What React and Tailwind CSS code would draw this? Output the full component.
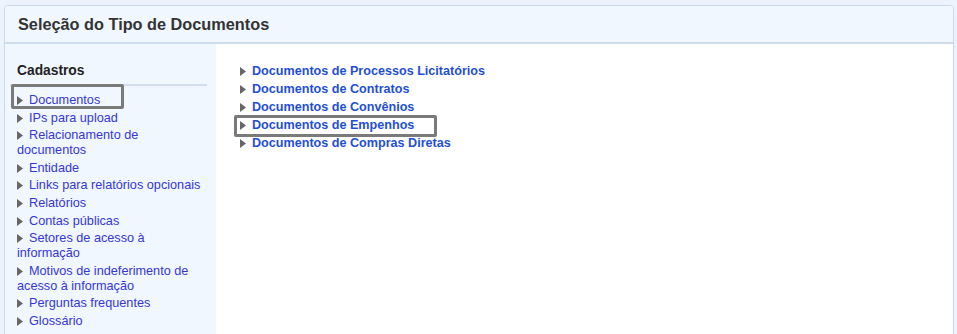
import React from "react";

const Tri = () => (
  <svg width="6" height="9" viewBox="0 0 6 9" className="inline-block mr-[6px] align-[-1px]">
    <polygon points="0,0 6,4.5 0,9" fill="#666666" />
  </svg>
);

const side = [
  "Documentos",
  "IPs para upload",
  "Relacionamento de documentos",
  "Entidade",
  "Links para relatórios opcionais",
  "Relatórios",
  "Contas públicas",
  "Setores de acesso à informação",
  "Motivos de indeferimento de acesso à informação",
  "Perguntas frequentes",
  "Glossário",
];

const docs = [
  "Documentos de Processos Licitatórios",
  "Documentos de Contratos",
  "Documentos de Convênios",
  "Documentos de Empenhos",
  "Documentos de Compras Diretas",
];

export default function App() {
  return (
    <div
      className="min-h-[334px] bg-[#edf3fc] pt-[5px] pl-[4px] pr-[3px] overflow-hidden"
      style={{ fontFamily: '"Liberation Sans", Arial, sans-serif' }}
    >
      <div className="border border-[#c9d9ec] rounded-t-[4px] overflow-hidden">
        <div className="h-[38px] bg-[#f0f7ff] border-b-2 border-[#cfdcec] flex items-center pl-[13px] pt-[1px]">
          <h1 className="text-[16.3px] font-bold text-[#333]">Seleção do Tipo de Documentos</h1>
        </div>
        <div className="flex min-h-[300px]">
          <div className="w-[211px] bg-[#f0f7ff] pt-[18px] pb-[4px]">
            <div className="pl-[12px] text-[13.8px] font-bold text-[#222] leading-[18px]">Cadastros</div>
            <div className="ml-[5px] mr-[9px] mt-[4px] border-t-2 border-[#d3deec]"></div>
            <ul className="mt-[7px] pl-[12px] pr-[12px] text-[12.7px] leading-[15px] text-[#3636d8]">
              {side.map((s, i) => (
                <li key={s} className="relative mb-[2.6px]">
                  <Tri />
                  {s}
                  {i === 0 && (
                    <span className="absolute left-[-6px] top-[-9px] w-[113px] h-[25px] border-[3px] border-[#7a7a7a] rounded-[2px]"></span>
                  )}
                </li>
              ))}
            </ul>
          </div>
          <div className="flex-1 bg-white pt-[20px] pl-[24px]">
            <ul className="text-[12.6px] leading-[15px] font-bold text-[#1f4fd6]">
              {docs.map((d, i) => (
                <li key={d} className="relative mb-[3px]">
                  <Tri />
                  {d}
                  {i === 3 && (
                    <span className="absolute left-[-6px] top-[-3px] w-[203px] h-[22px] border-[3px] border-[#7a7a7a] rounded-[2px]"></span>
                  )}
                </li>
              ))}
            </ul>
          </div>
        </div>
      </div>
    </div>
  );
}
